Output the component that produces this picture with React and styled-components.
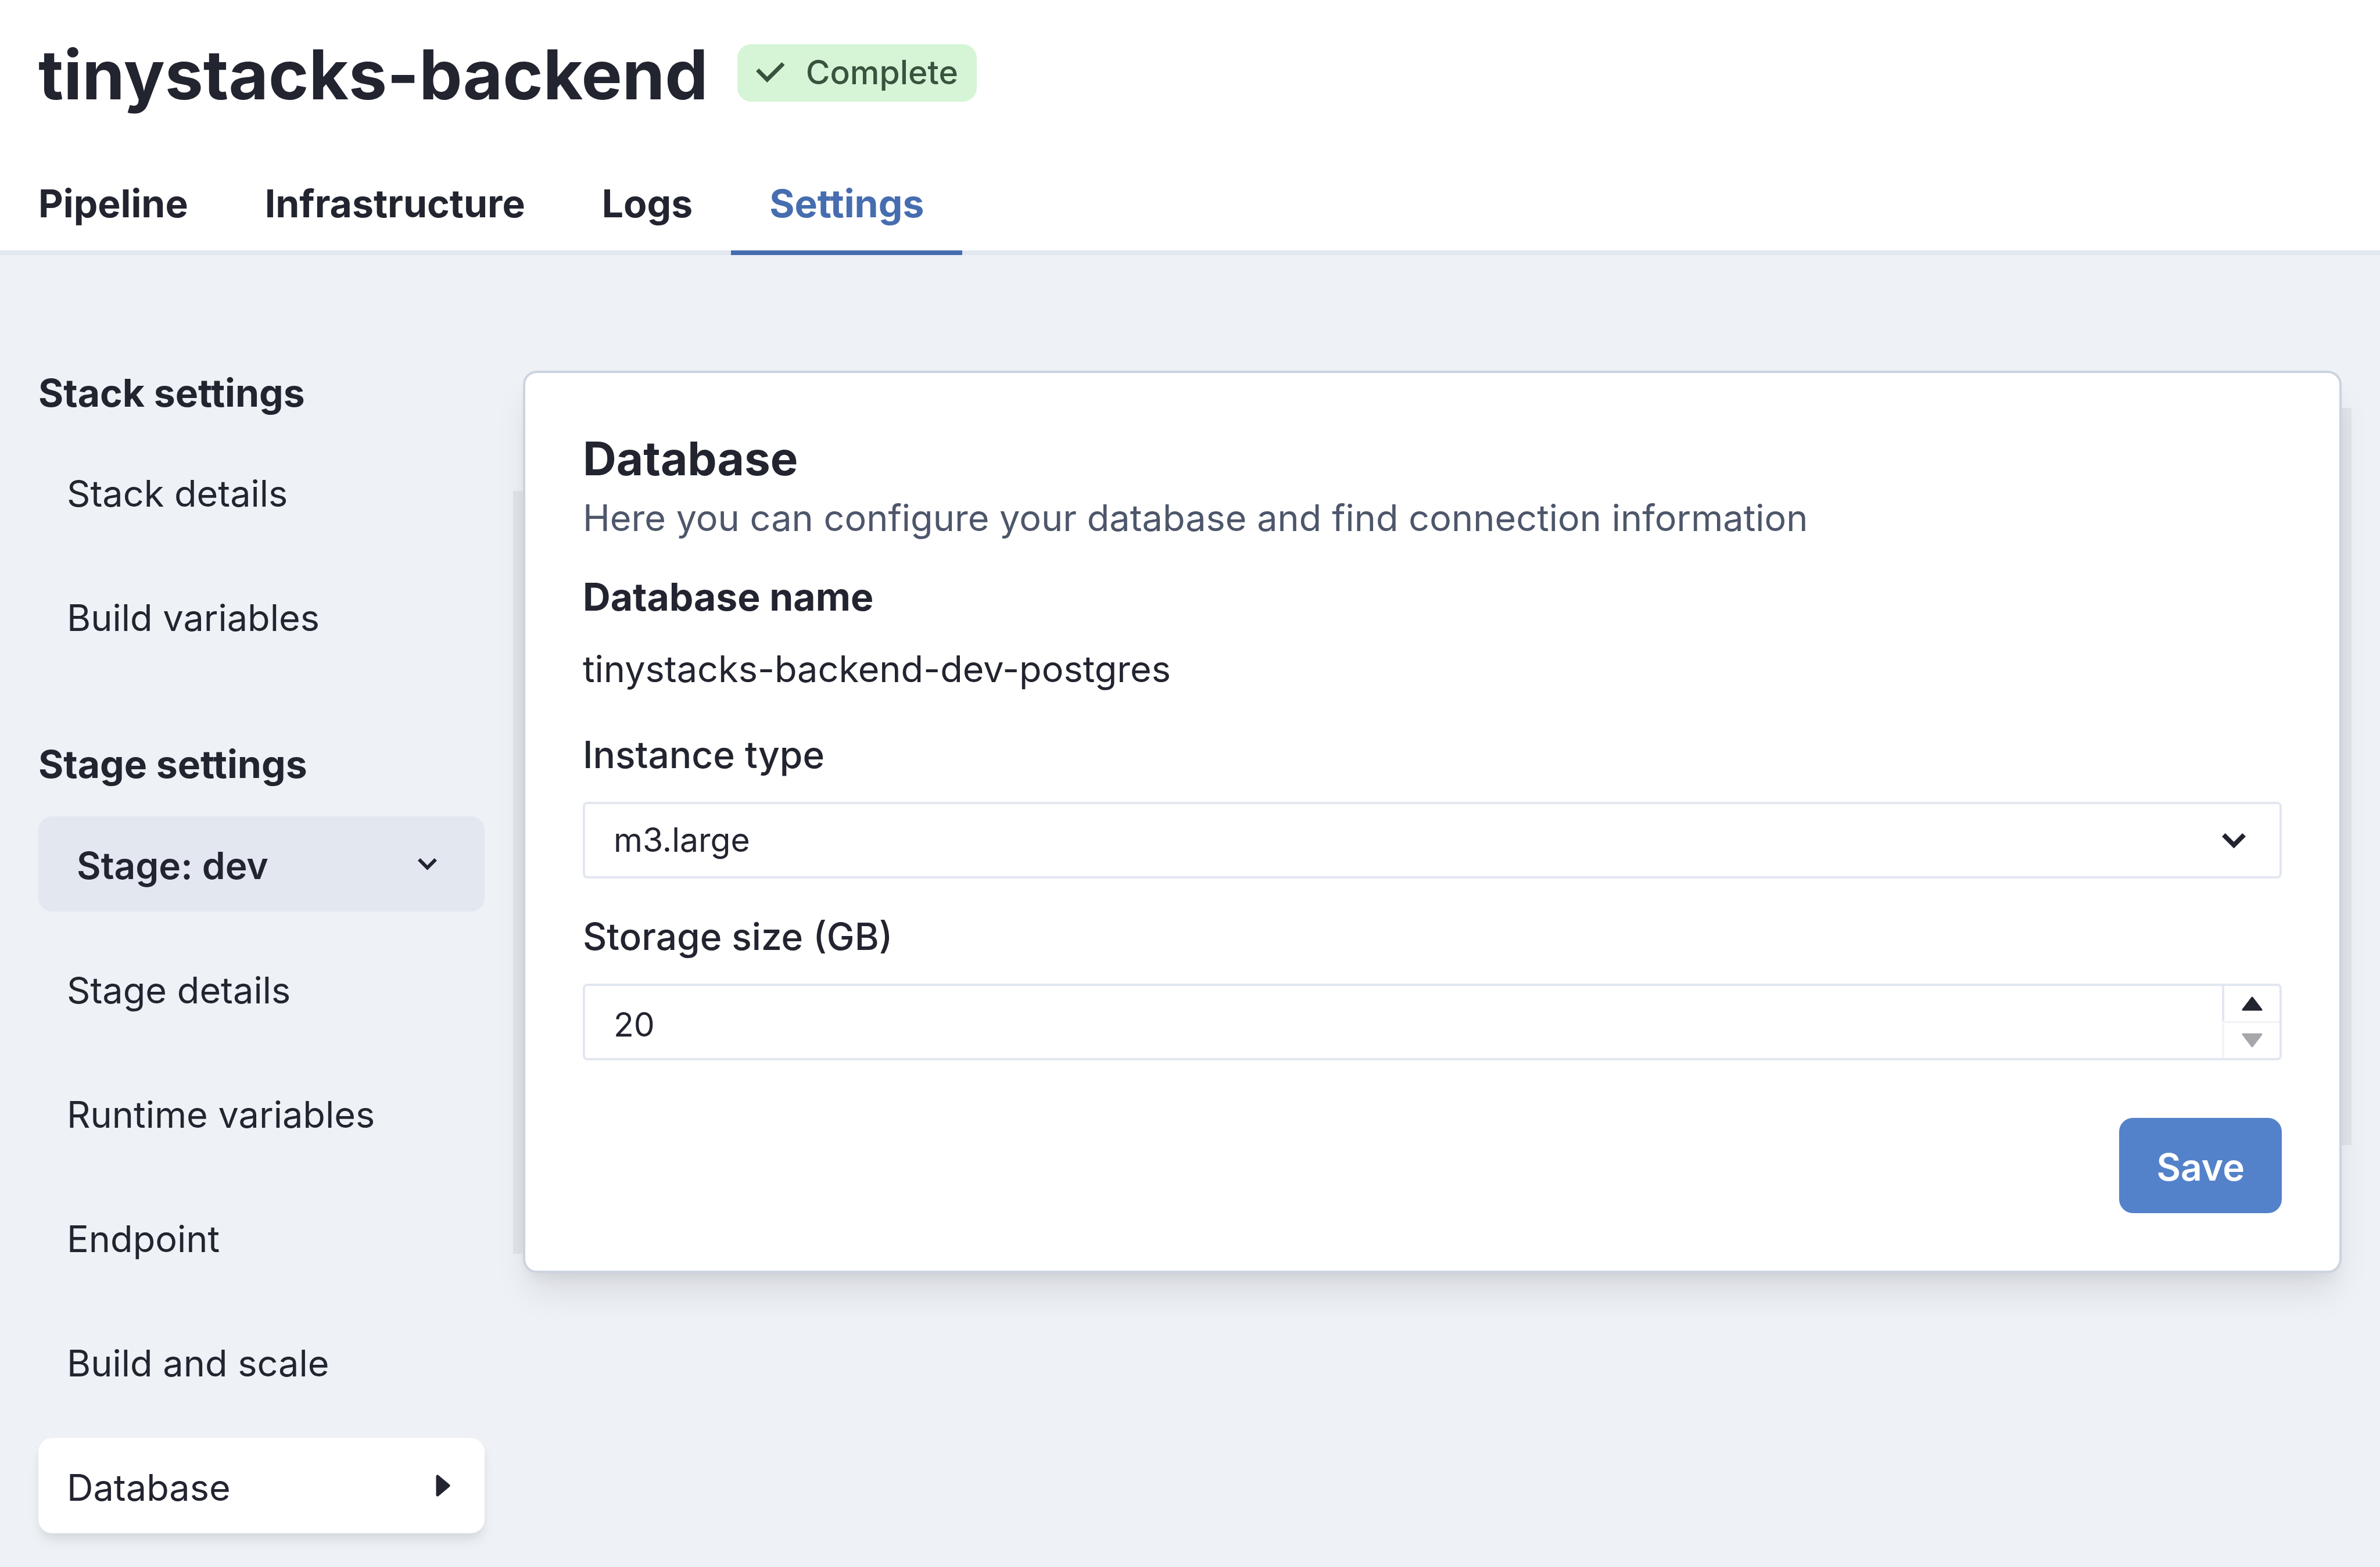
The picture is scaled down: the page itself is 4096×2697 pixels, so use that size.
import React, { useState } from "react";
import styled, { createGlobalStyle } from "styled-components";

const ink = "#22242f";
const line = "#e2e7f0";

const Global = createGlobalStyle`
  *, *::before, *::after { box-sizing: border-box; }
  body {
    margin: 0;
    background: #eef1f6;
    color: ${ink};
    font-family: Inter, "Liberation Sans", sans-serif;
    font-size: 63px;
    line-height: 96px;
  }
  h1, h2, h3, p, ul { margin: 0; padding: 0; }
  button, input, select { font: inherit; color: inherit; margin: 0; }
`;

const Header = styled.header`
  background: #fff;
  border-bottom: 8px solid ${line};
`;

const TitleRow = styled.div`
  display: flex;
  align-items: center;
  gap: 50px;
  height: 250px;
  padding: 0 66px;
`;

const Title = styled.h1`
  padding-top: 6px;
  font-size: 118px;
  line-height: 160px;
  font-weight: 700;
`;

const Badge = styled.span`
  display: flex;
  align-items: center;
  gap: 36px;
  height: 99px;
  padding: 0 32px;
  border-radius: 24px;
  background: #d5f5d6;
  color: #38543f;
  font-size: 57px;
  font-weight: 500;
`;

const Tabs = styled.nav`
  display: flex;
`;

const Tab = styled.a`
  padding: 52px 66px 33px;
  margin-bottom: -8px;
  border-bottom: 8px solid ${(p) => (p.$active ? "#466daf" : "transparent")};
  color: ${(p) => (p.$active ? "#466daf" : ink)};
  font-size: 66px;
  font-weight: 700;
  text-decoration: none;
`;

const Main = styled.main`
  display: flex;
  align-items: flex-start;
  gap: 66px;
  padding: 199px 66px 48px;
`;

const Sidebar = styled.nav`
  display: flex;
  flex-direction: column;
  width: 768px;
  flex: none;
`;

const GroupTitle = styled.h3`
  font-size: 66px;
  line-height: 76px;
  font-weight: 700;
`;

const Text = styled.span`
  padding-top: 6px;
`;

const StageButton = styled.button`
  display: flex;
  align-items: center;
  justify-content: space-between;
  height: 164px;
  margin-top: 52px;
  padding: 0 82px 0 66px;
  border: 0;
  border-radius: 24px;
  background: #e3e7f0;
  font-size: 64px;
  font-weight: 600;
`;

const List = styled.ul`
  display: flex;
  flex-direction: column;
  gap: 50px;
  margin: 50px 0 ${(p) => (p.$spaced ? "135px" : "0")};
  list-style: none;
`;

const Item = styled.a`
  display: flex;
  align-items: center;
  justify-content: space-between;
  height: 164px;
  padding: 0 49px;
  border-radius: 24px;
  color: ${ink};
  text-decoration: none;
  background: ${(p) => (p.$active ? "#fff" : "transparent")};
  box-shadow: ${(p) => (p.$active ? "0 16px 24px -4px rgba(0,0,0,.08), 0 8px 16px -4px rgba(0,0,0,.06)" : "none")};
`;

const Card = styled.form`
  flex: 1;
  min-width: 0;
  display: flex;
  flex-direction: column;
  padding: 99px;
  border: 4px solid #ccd3e0;
  border-radius: 24px;
  background: #fff;
  box-shadow:
    0 41px 62px -12px rgba(0,0,0,.1),
    0 16px 25px -8px rgba(0,0,0,.05),
    159px -78px 0 -142px rgba(0,0,0,.05),
    -137px 87px 0 -120px rgba(0,0,0,.05);
`;

const CardTitle = styled.h2`
  margin-bottom: 6px;
  font-size: 80px;
  font-weight: 700;
`;

const Hint = styled.p`
  color: #4d566a;
`;

const SubTitle = styled.h3`
  margin-top: 40px;
  font-size: 66px;
  font-weight: 700;
`;

const Value = styled.p`
  margin-top: 28px;
`;

const Label = styled.label`
  margin: 52px 0 33px;
  font-size: 64px;
  font-weight: 500;
`;

const Field = styled.div`
  display: flex;
  align-items: center;
  height: 132px;
  border: 4px solid ${line};
  border-radius: 8px;
  font-size: 57px;
  position: relative;
  & > svg { position: absolute; right: 58px; pointer-events: none; }
`;

const Select = styled.select`
  appearance: none;
  width: 100%;
  height: 100%;
  padding: 0 49px;
  border: 0;
  background: transparent;
`;

const NumberInput = styled.input`
  flex: 1;
  min-width: 0;
  height: 100%;
  padding: 8px 49px 0;
  border: 0;
  background: transparent;
`;

const Stepper = styled.div`
  display: flex;
  flex-direction: column;
  width: 99px;
  height: 100%;
`;

const Step = styled.button`
  flex: 1;
  display: grid;
  place-items: center;
  padding: 0;
  border: 0 solid ${line};
  border-left-width: 4px;
  background: transparent;
  &:disabled { opacity: 0.4; border-top-width: 4px; }
`;

const Save = styled.button`
  align-self: flex-end;
  height: 164px;
  margin-top: 99px;
  padding: 6px 64px 0;
  border: 0;
  border-radius: 24px;
  background: #5482ca;
  color: #fff;
  font-size: 64px;
  font-weight: 600;
`;

const Chevron = ({ w, stroke }) => {
  const inset = stroke * 0.36;
  const h = Math.round(w / 2) + 6;
  return (
    <svg width={w} height={h} viewBox={`0 0 ${w} ${h}`} fill="none" aria-hidden="true">
      <path
        d={`M${inset} ${inset + 1} L${w / 2} ${w / 2 + 1} L${w - inset} ${inset + 1}`}
        stroke={ink} strokeWidth={stroke}
      />
    </svg>
  );
};

const Check = () => (
  <svg width="50" height="36" viewBox="0 0 50 36" fill="none" aria-hidden="true">
    <path d="M2.6 13.3 L19.3 30 L47 2.6" stroke="#38543f" strokeWidth="7" />
  </svg>
);

const Triangle = ({ down }) => (
  <svg width="38" height="26" viewBox="0 0 38 26" aria-hidden="true">
    <path
      d={down ? "M3 2 H35 L19 23 Z" : "M3 24 H35 L19 3 Z"}
      fill={ink} stroke={ink} strokeWidth="3" strokeLinejoin="round"
    />
  </svg>
);

const Caret = () => (
  <svg width="35" height="38" viewBox="0 0 35 38" aria-hidden="true">
    <path d="M3 3 V35 L22 19 Z" fill={ink} stroke={ink} strokeWidth="5" strokeLinejoin="round" />
  </svg>
);

const tabs = ["Pipeline", "Infrastructure", "Logs", "Settings"];
const stackItems = ["Stack details", "Build variables"];
const stageItems = ["Stage details", "Runtime variables", "Endpoint", "Build and scale", "Database"];

const Items = ({ items, current, spaced }) => (
  <List $spaced={spaced}>
    {items.map((name) => (
      <li key={name}>
        <Item href="#" $active={name === current}>
          <Text>{name}</Text>
          {name === current && <Caret />}
        </Item>
      </li>
    ))}
  </List>
);

export default function App() {
  const [size, setSize] = useState(20);
  return (
    <>
      <Global />
      <Header>
        <TitleRow>
          <Title>tinystacks-backend</Title>
          <Badge><Check />Complete</Badge>
        </TitleRow>
        <Tabs>
          {tabs.map((t) => <Tab key={t} href="#" $active={t === "Settings"}>{t}</Tab>)}
        </Tabs>
      </Header>
      <Main>
        <Sidebar>
          <GroupTitle>Stack settings</GroupTitle>
          <Items items={stackItems} spaced />
          <GroupTitle>Stage settings</GroupTitle>
          <StageButton type="button"><Text>Stage: dev</Text><Chevron w={33} stroke={6} /></StageButton>
          <Items items={stageItems} current="Database" />
        </Sidebar>
        <Card onSubmit={(e) => e.preventDefault()}>
          <CardTitle>Database</CardTitle>
          <Hint>Here you can configure your database and find connection information</Hint>
          <SubTitle>Database name</SubTitle>
          <Value>tinystacks-backend-dev-postgres</Value>
          <Label htmlFor="instance">Instance type</Label>
          <Field>
            <Select id="instance" defaultValue="m3.large"><option>m3.large</option></Select>
            <Chevron w={41} stroke={8} />
          </Field>
          <Label htmlFor="storage">Storage size (GB)</Label>
          <Field>
            <NumberInput id="storage" type="text" inputMode="numeric" value={size}
              onChange={(e) => setSize(Number(e.target.value) || 20)} />
            <Stepper>
              <Step type="button" aria-label="Increase" onClick={() => setSize(size + 1)}><Triangle /></Step>
              <Step type="button" aria-label="Decrease" disabled={size <= 20} onClick={() => setSize(size - 1)}><Triangle down /></Step>
            </Stepper>
          </Field>
          <Save type="submit">Save</Save>
        </Card>
      </Main>
    </>
  );
}
